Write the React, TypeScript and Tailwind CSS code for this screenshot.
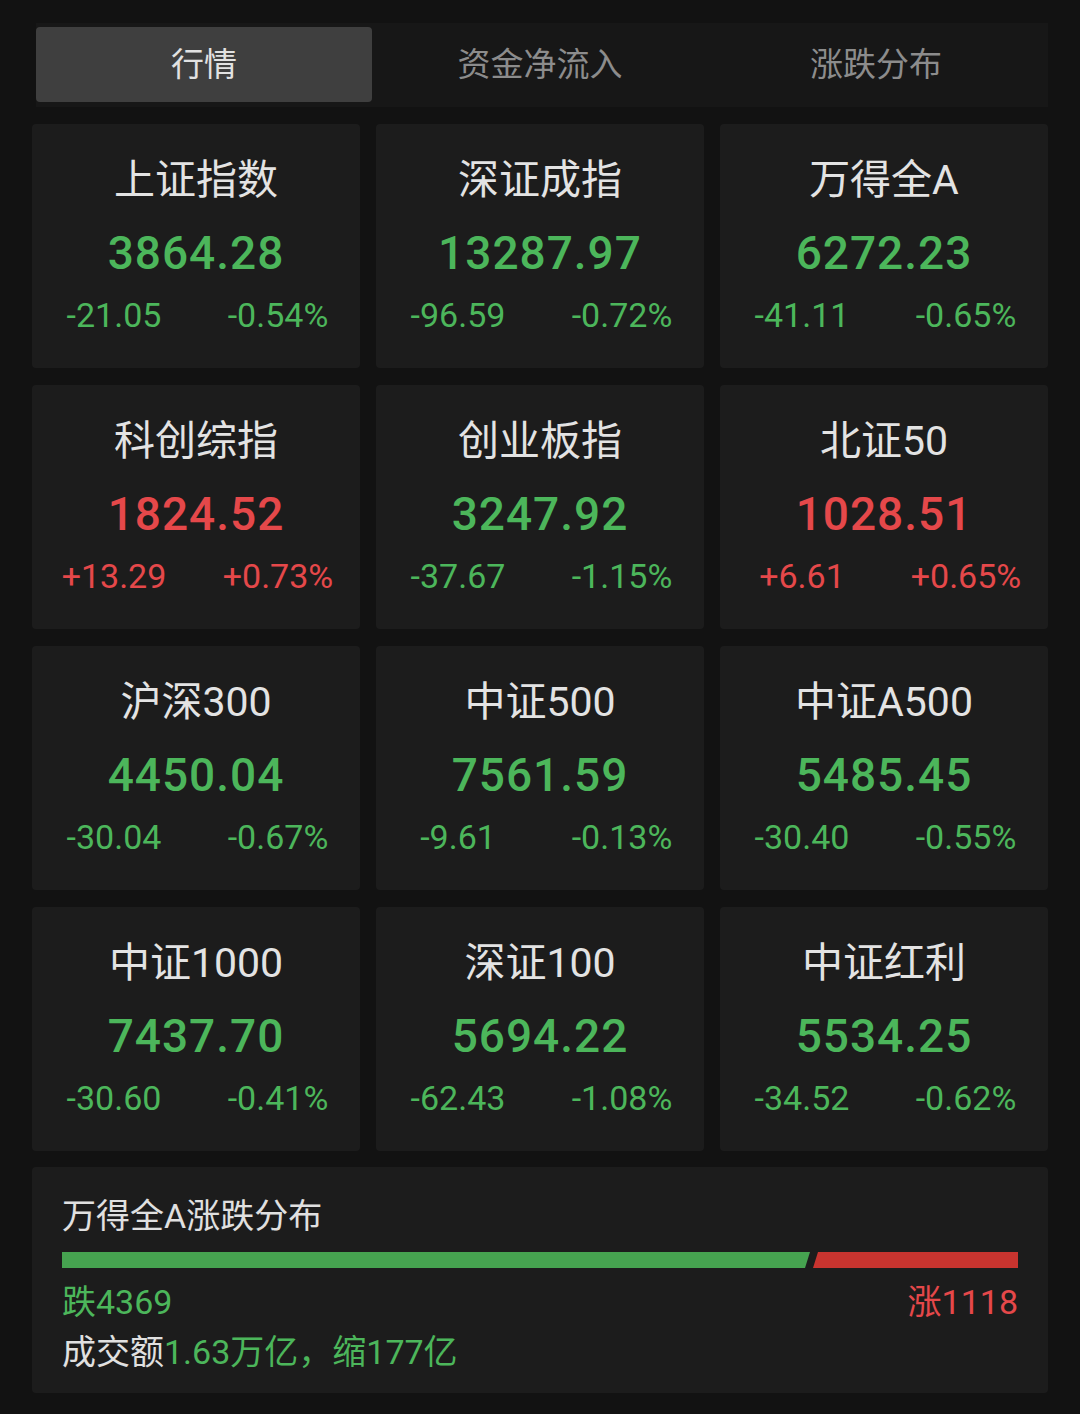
import React from "react";

type Quote = {
  name: string;
  value: string;
  change: string;
  pct: string;
  up: boolean;
};

const quotes: Quote[] = [
  { name: "上证指数", value: "3864.28", change: "-21.05", pct: "-0.54%", up: false },
  { name: "深证成指", value: "13287.97", change: "-96.59", pct: "-0.72%", up: false },
  { name: "万得全A", value: "6272.23", change: "-41.11", pct: "-0.65%", up: false },
  { name: "科创综指", value: "1824.52", change: "+13.29", pct: "+0.73%", up: true },
  { name: "创业板指", value: "3247.92", change: "-37.67", pct: "-1.15%", up: false },
  { name: "北证50", value: "1028.51", change: "+6.61", pct: "+0.65%", up: true },
  { name: "沪深300", value: "4450.04", change: "-30.04", pct: "-0.67%", up: false },
  { name: "中证500", value: "7561.59", change: "-9.61", pct: "-0.13%", up: false },
  { name: "中证A500", value: "5485.45", change: "-30.40", pct: "-0.55%", up: false },
  { name: "中证1000", value: "7437.70", change: "-30.60", pct: "-0.41%", up: false },
  { name: "深证100", value: "5694.22", change: "-62.43", pct: "-1.08%", up: false },
  { name: "中证红利", value: "5534.25", change: "-34.52", pct: "-0.62%", up: false },
];

const tabs = ["行情", "资金净流入", "涨跌分布"];

const font = "font-['Roboto','Noto_Sans_CJK_SC',sans-serif]";

function QuoteCard({ q }: { q: Quote }) {
  const color = q.up ? "text-[#e5484a]" : "text-[#4cb65b]";
  return (
    <div className="h-[244px] rounded bg-[#1c1c1c] flex flex-col items-center pt-[36px]">
      <div className="text-[41px] leading-none text-[#e3e3e3]">{q.name}</div>
      <div className={`mt-[29px] text-[46px] leading-none font-medium tracking-[1px] ${color}`}>
        {q.value}
      </div>
      <div className={`mt-[22px] w-full flex text-[34px] leading-none ${color}`}>
        <span className="flex-1 text-center">{q.change}</span>
        <span className="flex-1 text-center">{q.pct}</span>
      </div>
    </div>
  );
}

export default function App() {
  const down = 4369;
  const up = 1118;

  return (
    <div className={`w-[1080px] min-h-[1414px] bg-[#121212] ${font} pt-[23px]`}>
      {/* Tabs */}
      <div className="ml-[36px] mr-8 h-[84px] bg-[#171717] flex pt-1">
        {tabs.map((t, i) => (
          <div
            key={t}
            className={`w-[336px] h-[75px] rounded flex items-center justify-center text-[33px] ${
              i === 0 ? "bg-[#3f3f3f] text-[#e2e2e2]" : "text-[#8c8c8c]"
            }`}
          >
            {t}
          </div>
        ))}
      </div>

      {/* Index cards */}
      <div className="mt-[17px] px-8 grid grid-cols-3 gap-x-4 gap-y-[17px]">
        {quotes.map((q) => (
          <QuoteCard key={q.name} q={q} />
        ))}
      </div>

      {/* Distribution */}
      <div className="mx-8 mt-4 h-[226px] rounded bg-[#1c1c1c] px-[30px] pt-[32px]">
        <div className="text-[34px] leading-none text-[#e0e0e0]">万得全A涨跌分布</div>
        <div className="mt-[19px] h-[16px] flex gap-[3px]">
          <div
            className="h-full w-[748px] bg-[#46a350] [clip-path:polygon(0_0,100%_0,calc(100%-5px)_100%,0_100%)]"
            title={`${down}`}
          />
          <div
            className="h-full flex-1 bg-[#c8342f] [clip-path:polygon(5px_0,100%_0,100%_100%,0_100%)]"
            title={`${up}`}
          />
        </div>
        <div className="mt-[17px] flex justify-between text-[34px] leading-none">
          <span className="text-[#4cb65b]">跌{down}</span>
          <span className="text-[#e5484a]">涨{up}</span>
        </div>
        <div className="mt-[16px] text-[34px] leading-none text-[#e0e0e0]">
          成交额<span className="text-[#4cb65b]">1.63万亿，缩177亿</span>
        </div>
      </div>
    </div>
  );
}
